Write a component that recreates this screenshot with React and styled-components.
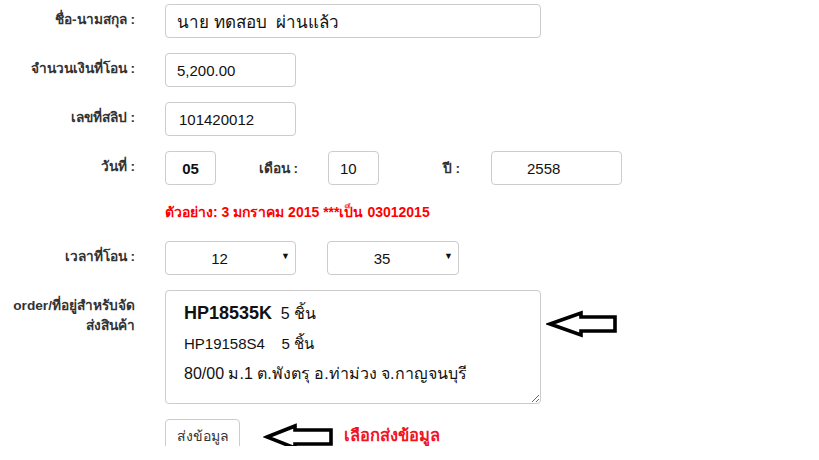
import React from "react";
import styled, { createGlobalStyle } from "styled-components";

const GlobalStyle = createGlobalStyle`
  html, body {
    margin: 0;
    padding: 0;
    background: #fff;
  }
  body {
    font-family: "Liberation Sans", Arial, "Noto Sans", sans-serif;
    color: #333;
  }
`;

const Page = styled.form`
  width: 819px;
  height: 446px;
  overflow: hidden;
  padding-top: 4px;
  box-sizing: border-box;
`;

const Row = styled.div`
  display: grid;
  grid-template-columns: 135px auto;
  column-gap: 30px;
  margin-bottom: ${p => p.$gap ?? 15}px;
  align-items: start;
`;

const Label = styled.label`
  text-align: right;
  font-size: 13.7px;
  font-weight: bold;
  line-height: ${p => p.$lh ?? 18}px;
  padding-top: ${p => p.$pt ?? 7}px;
  color: #333;
`;

const Field = styled.input`
  box-sizing: border-box;
  width: ${p => p.$w}px;
  height: 34px;
  padding: 0 0 0 ${p => p.$pl ?? 11}px;
  border: 1px solid #ccc;
  border-radius: 4px;
  background: #fff;
  font-family: inherit;
  font-size: ${p => p.$fs ?? 15}px;
  font-weight: ${p => (p.$bold ? "bold" : "normal")};
  text-align: ${p => p.$align ?? "left"};
  color: #111;
  outline: none;
`;

const DateGrid = styled.div`
  display: grid;
  grid-template-columns: 51px 112px 51px 112px 131px;
  align-items: center;
`;

const InlineLabel = styled.span`
  text-align: right;
  padding-right: ${p => p.$pr ?? 30}px;
  font-size: 13.7px;
  font-weight: bold;
  color: #333;
`;

const Hint = styled.div`
  grid-column: 2;
  font-size: 14px;
  font-weight: bold;
  color: #f00;
  line-height: 18px;
  padding-top: 3px;
  height: 26px;
  box-sizing: border-box;
`;

const SelectGroup = styled.div`
  display: flex;
  gap: 31px;
`;

const SelectBox = styled.div`
  position: relative;
  width: ${p => p.$w}px;
`;

const Select = styled.select`
  appearance: none;
  box-sizing: border-box;
  width: 100%;
  height: 34px;
  border: 1px solid #ccc;
  border-radius: 4px;
  background: #fff;
  padding: 0 22px 0 0;
  font-family: inherit;
  font-size: 15px;
  color: #111;
  text-align-last: center;
  outline: none;
`;

const Caret = styled.span`
  position: absolute;
  right: 6px;
  top: 10px;
  font-size: 9px;
  color: #111;
  pointer-events: none;
`;

const AreaRow = styled.div`
  display: flex;
  align-items: flex-start;
  gap: 5px;
`;

const TextArea = styled.div`
  box-sizing: border-box;
  width: 376px;
  height: 114px;
  border: 1px solid #ccc;
  border-radius: 4px;
  padding: 7px 12px 0 18px;
  font-size: 15px;
  line-height: 30px;
  color: #111;
  resize: both;
  overflow: hidden;
`;

const Strong = styled.b`
  font-size: 18px;
`;

const Big = styled.span`
  font-size: 16px;
`;

const ArrowWrap = styled.div`
  margin-top: ${p => p.$mt}px;
  margin-left: ${p => p.$ml ?? 0}px;
  display: flex;
`;

const SubmitRow = styled.div`
  display: flex;
  align-items: flex-start;
`;

const Button = styled.button`
  box-sizing: border-box;
  width: 75px;
  height: 34px;
  border: 1px solid #ccc;
  border-radius: 4px;
  background: #fff;
  font-family: inherit;
  font-size: 14px;
  color: #333;
  padding: 0;
`;

const Note = styled.span`
  margin-left: 10px;
  margin-top: 6px;
  font-size: 16.5px;
  line-height: 20px;
  font-weight: bold;
  color: #f0141e;
`;

const Arrow = ({ w, h, head }) => (
  <svg width={w} height={h} viewBox={`0 0 ${w} ${h}`}>
    <path
      d={`M 4,${h / 2} L ${head},3 L ${head},${h / 2 - 7} L ${w - 3},${h / 2 - 7} L ${w - 3},${h / 2 + 7} L ${head},${h / 2 + 7} L ${head},${h - 3} Z`}
      fill="#fff"
      stroke="#000"
      strokeWidth="3.6"
      strokeLinejoin="miter"
    />
  </svg>
);

const App = () => {
  return (
    <>
      <GlobalStyle />
      <Page onSubmit={e => e.preventDefault()}>
        <Row>
          <Label>ชื่อ-นามสกุล :</Label>
          <Field $w={376} $fs={17} defaultValue="นาย ทดสอบ  ผ่านแล้ว" />
        </Row>
        <Row>
          <Label>จำนวนเงินที่โอน :</Label>
          <Field $w={131} defaultValue="5,200.00" />
        </Row>
        <Row>
          <Label>เลขที่สลิป :</Label>
          <Field $w={131} $pl={13} defaultValue="101420012" />
        </Row>
        <Row>
          <Label>วันที่ :</Label>
          <DateGrid>
            <Field $w={51} $pl={0} $bold $align="center" defaultValue="05" />
            <InlineLabel $pr={30}>เดือน :</InlineLabel>
            <Field $w={51} $pl={11} defaultValue="10" />
            <InlineLabel $pr={31}>ปี :</InlineLabel>
            <Field $w={131} $pl={35} defaultValue="2558" />
          </DateGrid>
        </Row>
        <Row>
          <Hint>ตัวอย่าง: 3 มกราคม 2015 ***เป็น 03012015</Hint>
        </Row>
        <Row>
          <Label>เวลาที่โอน :</Label>
          <SelectGroup>
            <SelectBox $w={131}>
              <Select defaultValue="12">
                <option>12</option>
              </Select>
              <Caret>▼</Caret>
            </SelectBox>
            <SelectBox $w={132}>
              <Select defaultValue="35">
                <option>35</option>
              </Select>
              <Caret>▼</Caret>
            </SelectBox>
          </SelectGroup>
        </Row>
        <Row>
          <Label $lh={20} $pt={6}>
            order/ที่อยู่สำหรับจัด
            <br />
            ส่งสินค้า
          </Label>
          <AreaRow>
            <TextArea>
              <Strong>HP18535K</Strong> <Big>&nbsp;5 ชิ้น</Big>
              <br />
              HP19158S4&nbsp;&nbsp;&nbsp;&nbsp;5 ชิ้น
              <br />
              <Big>80/00 ม.1 ต.พังตรุ อ.ท่าม่วง จ.กาญจนบุรี</Big>
            </TextArea>
            <ArrowWrap $mt={20}>
              <Arrow w={72} h={28} head={35} />
            </ArrowWrap>
          </AreaRow>
        </Row>
        <Row>
          <span />
          <SubmitRow>
            <Button type="submit">ส่งข้อมูล</Button>
            <ArrowWrap $mt={4} $ml={23}>
              <Arrow w={71} h={28} head={32} />
            </ArrowWrap>
            <Note>เลือกส่งข้อมูล</Note>
          </SubmitRow>
        </Row>
      </Page>
    </>
  );
};

export default App;
